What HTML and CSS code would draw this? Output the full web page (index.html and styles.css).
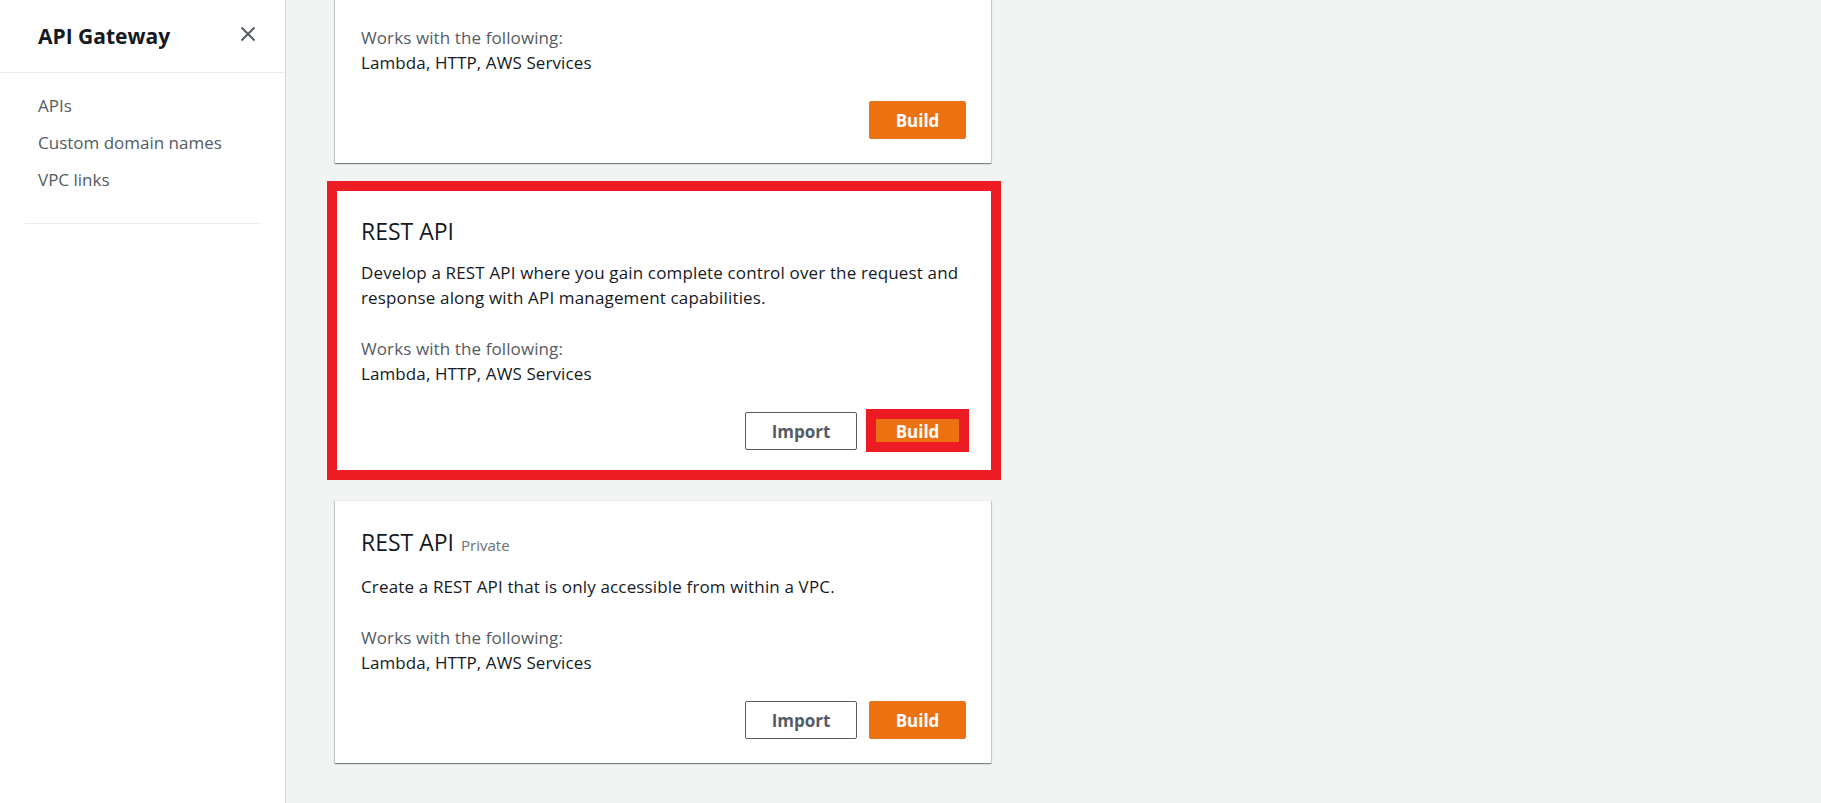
FILE: index.html
```html
<!DOCTYPE html>
<html lang="en">
<head>
<meta charset="utf-8">
<title>API Gateway</title>
<link rel="stylesheet" href="styles.css">
</head>
<body>
<div class="layout">
  <aside class="sidebar">
    <div class="side-header">
      <h2 class="side-title">API Gateway</h2>
      <button class="close" aria-label="Close">
        <svg width="16" height="16" viewBox="0 0 16 16"><path d="M1.5 1.5 L14.5 14.5 M14.5 1.5 L1.5 14.5" stroke="#545b64" stroke-width="2" fill="none" stroke-linecap="butt"/></svg>
      </button>
    </div>
    <nav class="side-nav">
      <a class="nav-link">APIs</a>
      <a class="nav-link">Custom domain names</a>
      <a class="nav-link">VPC links</a>
    </nav>
    <hr class="side-divider">
  </aside>
  <main class="main">
    <div class="cards">
      <section class="card card-partial">
        <p class="works"><span class="works-label">Works with the following:</span><span class="works-list">Lambda, HTTP, AWS Services</span></p>
        <div class="actions">
          <button class="btn btn-primary">Build</button>
        </div>
      </section>
      <section class="card highlighted">
        <h3 class="card-title">REST API</h3>
        <p class="card-desc">Develop a REST API where you gain complete control over the request and response along with API management capabilities.</p>
        <p class="works"><span class="works-label">Works with the following:</span><span class="works-list">Lambda, HTTP, AWS Services</span></p>
        <div class="actions">
          <button class="btn btn-normal">Import</button>
          <button class="btn btn-primary marked">Build</button>
        </div>
      </section>
      <section class="card">
        <h3 class="card-title">REST API <span class="card-tag">Private</span></h3>
        <p class="card-desc">Create a REST API that is only accessible from within a VPC.</p>
        <p class="works"><span class="works-label">Works with the following:</span><span class="works-list">Lambda, HTTP, AWS Services</span></p>
        <div class="actions">
          <button class="btn btn-normal">Import</button>
          <button class="btn btn-primary">Build</button>
        </div>
      </section>
    </div>
  </main>
</div>
</body>
</html>
```
FILE: styles.css
```css
* { box-sizing: border-box; }
html, body { margin: 0; padding: 0; height: 100%; }
body {
  font-family: "Open Sans", "Noto Sans", sans-serif;
  color: #16191f;
  background: #f2f3f3;
  overflow: hidden;
}
.layout {
  display: flex;
  height: 100vh;
}
.sidebar {
  width: 286px;
  flex: none;
  background: #fff;
  border-right: 1px solid #d5dbdb;
  display: flex;
  flex-direction: column;
}
.side-header {
  height: 73px;
  border-bottom: 1px solid #eaeded;
  display: flex;
  align-items: flex-start;
  justify-content: space-between;
  padding: 21px 29px 0 38px;
}
.side-title {
  margin: 0;
  font-size: 21px;
  line-height: 30px;
  font-weight: 700;
  color: #16191f;
}
.close {
  border: 0;
  background: none;
  padding: 0;
  margin-top: 5px;
  width: 16px;
  height: 16px;
  display: flex;
}
.side-nav {
  display: flex;
  flex-direction: column;
  padding: 19px 0 0 38px;
  gap: 10px;
}
.nav-link {
  font-size: 17px;
  line-height: 27px;
  color: #545b64;
}
.side-divider {
  border: 0;
  border-top: 1px solid #eaeded;
  margin: 30px 25px 0 25px;
  height: 0;
}
.main {
  flex: 1;
  padding-left: 49px;
}
.cards {
  width: 656px;
  margin-top: -10px;
  display: flex;
  flex-direction: column;
  gap: 26px;
}
.card {
  position: relative;
  background: #fff;
  padding: 27px 25px 24px 26px;
  box-shadow: 0 1px 1px 0 rgba(0,28,36,.3), 1px 1px 1px 0 rgba(0,28,36,.15), -1px 1px 1px 0 rgba(0,28,36,.15);
  border-top: 1px solid #eaeded;
}
.card-partial {
  padding-top: 34px;
}
.card.highlighted::after {
  content: "";
  position: absolute;
  top: -9px;
  left: -8px;
  right: -10px;
  bottom: -6px;
  border: 10px solid #ed1c24;
  pointer-events: none;
}
.card-title {
  margin: 0 0 14px;
  font-size: 23px;
  line-height: 29px;
  font-weight: 400;
  color: #16191f;
}
.card-tag {
  font-size: 15px;
  color: #687078;
  margin-left: 1px;
}
.card-desc {
  margin: 0 0 26px;
  font-size: 17px;
  letter-spacing: 0.15px;
  line-height: 25px;
}
.works {
  margin: 0 0 26px;
  font-size: 17px;
  letter-spacing: 0.1px;
  line-height: 25px;
  display: flex;
  flex-direction: column;
}
.works-label { color: #545b64; }
.works-list { color: #16191f; }
.actions {
  display: flex;
  justify-content: flex-end;
  gap: 12px;
}
.btn {
  position: relative;
  height: 38px;
  font-family: "Open Sans", "Noto Sans", sans-serif;
  font-size: 17px;
  font-weight: 700;
  border-radius: 2px;
  padding: 0;
  cursor: pointer;
}
.btn-normal {
  width: 112px;
  background: #fff;
  color: #545b64;
  border: 1px solid #545b64;
}
.btn-primary {
  width: 97px;
  background: #ec7211;
  color: #fff;
  border: 1px solid #ec7211;
}
.btn.marked::after {
  content: "";
  position: absolute;
  top: -4px;
  left: -4px;
  right: -4px;
  bottom: -3px;
  border: 10px solid #ed1c24;
}
```
